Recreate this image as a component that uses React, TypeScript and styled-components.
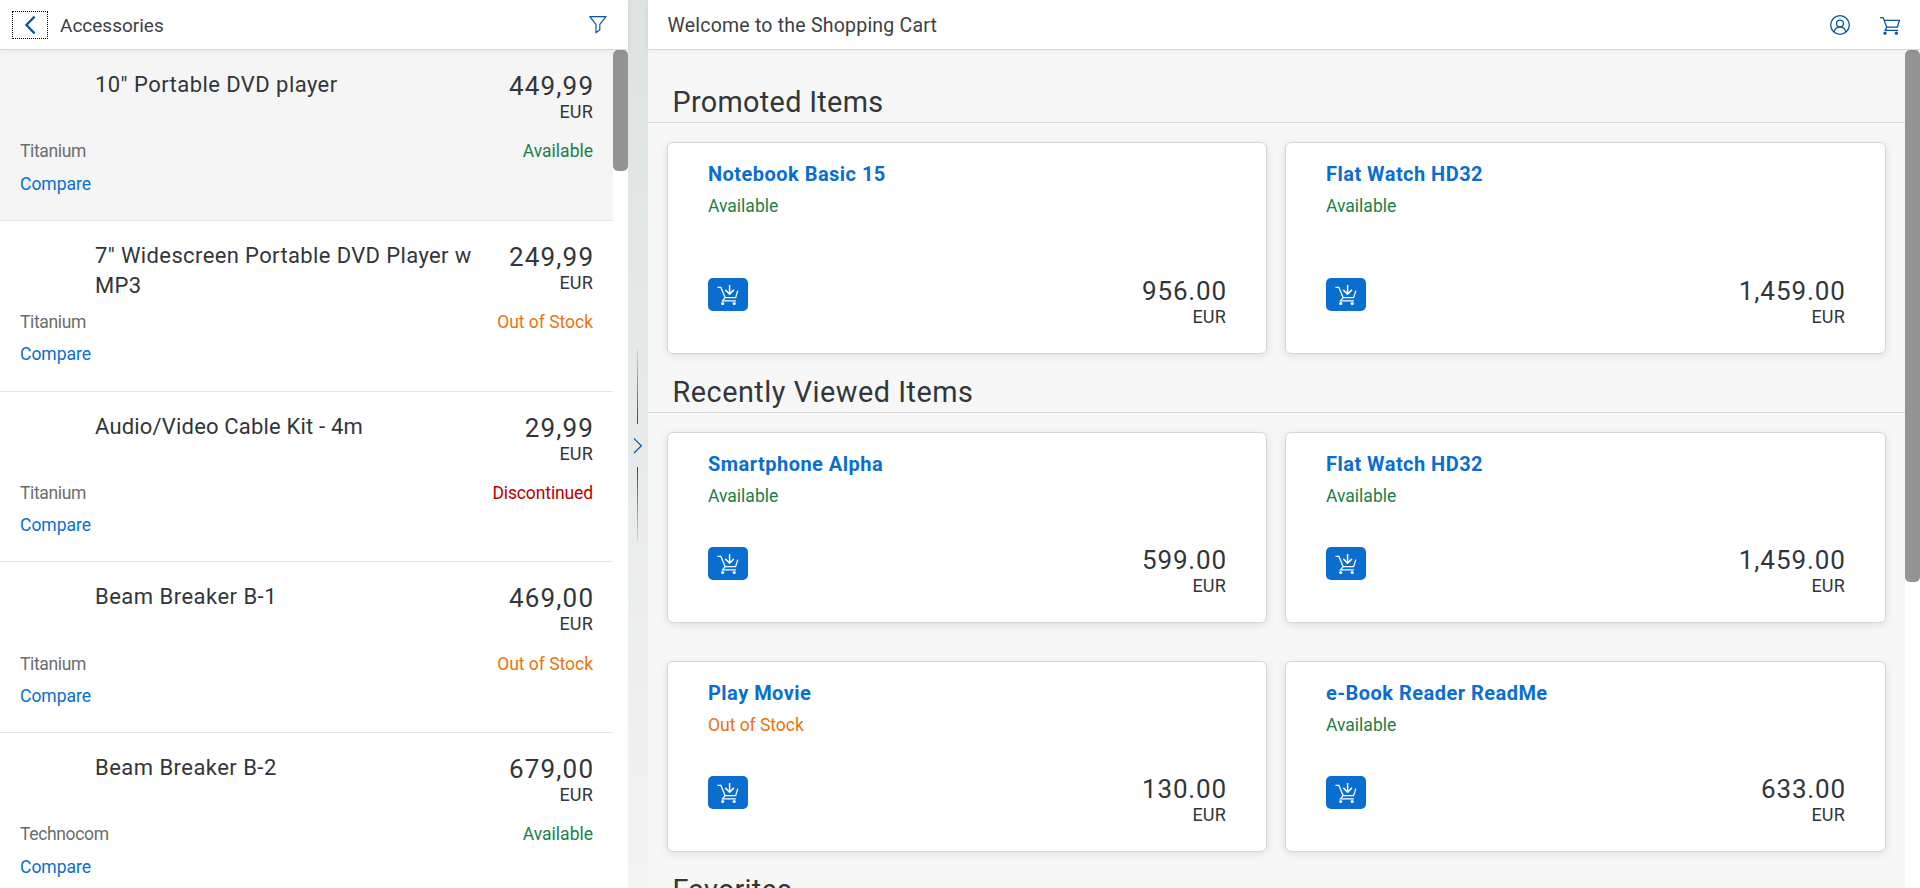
import React from "react";
import styled, { createGlobalStyle } from "styled-components";

const GlobalStyle = createGlobalStyle`
  * { box-sizing: border-box; }
  html, body { margin: 0; padding: 0; }
  body {
    font-family: Roboto, "Liberation Sans", sans-serif;
    font-size: 17.5px;
    color: #32363a;
    overflow: hidden;
  }
  svg { display: block; }
`;

type State = "Available" | "Out of Stock" | "Discontinued";

const stateStyle: Record<State, { color: string; tracking: number }> = {
  Available: { color: "#1a7e46", tracking: 0 },
  "Out of Stock": { color: "#e9730c", tracking: -0.03 },
  Discontinued: { color: "#bb0000", tracking: -0.12 },
};

const Shell = styled.div`
  display: flex;
  width: 100%;
  height: 100vh;
  min-height: 888px;
  max-height: 888px;
  overflow: hidden;
  background: #fff;
`;

const Master = styled.aside`
  display: flex;
  flex-direction: column;
  width: 628px;
  flex: none;
  background: #fff;
`;

const Detail = styled.main`
  display: flex;
  flex-direction: column;
  flex: 1;
  min-width: 0;
`;

const Bar = styled.header<{ $left: number; $right: number }>`
  display: flex;
  align-items: center;
  flex: none;
  height: 50px;
  padding: 0 ${(p) => p.$right}px 0 ${(p) => p.$left}px;
  background: #fff;
  border-bottom: 1px solid #d9d9d9;
  box-shadow: 0 1px 5px rgba(0, 0, 0, 0.07);
  z-index: 1;
`;

const BarTitle = styled.h1<{ $size: number; $tracking: number }>`
  flex: 1;
  margin: 0;
  padding-top: 2px;
  color: #3c4044;
  font-size: ${(p) => p.$size}px;
  line-height: 23px;
  font-weight: 400;
  letter-spacing: ${(p) => p.$tracking}px;
`;

const BackButton = styled.button`
  display: flex;
  align-items: center;
  justify-content: center;
  width: 36px;
  height: 28px;
  margin: 1px 12px 0 0;
  padding: 0;
  border: 1px dotted #000;
  background: none;
`;

const IconButton = styled.button`
  display: flex;
  padding: 0;
  border: 0;
  background: none;
`;

const BarActions = styled.div`
  display: flex;
  align-items: center;
  gap: 30px;
  padding-top: 1px;
`;

const Scroller = styled.div`
  display: flex;
  flex: 1;
  min-height: 0;
`;

const Track = styled.div`
  width: 15px;
  flex: none;
  background: #fff;
`;

const Thumb = styled.div<{ $length: number }>`
  height: ${(p) => p.$length}px;
  border-radius: 5px;
  background: #949494;
`;

const ProductList = styled.ul`
  flex: 1;
  margin: 0;
  padding: 0;
  list-style: none;
  overflow: hidden;
`;

const ProductRow = styled.li<{ $active?: boolean }>`
  height: 170.8px;
  padding: 20px 20px 0;
  background: ${(p) => (p.$active ? "#f5f5f5" : "#fff")};
  border-bottom: 1px solid #e5e5e5;
`;

const RowTop = styled.div`
  display: flex;
  justify-content: space-between;
  height: 70.15px;
  padding-left: 75px;
`;

const RowTitle = styled.span<{ $tracking: number }>`
  width: 394px;
  font-size: 22px;
  line-height: 30px;
  letter-spacing: ${(p) => p.$tracking}px;
`;

const RowLine = styled.div`
  display: flex;
  justify-content: space-between;
  height: 32.5px;
  line-height: 22px;
`;

const Brand = styled.span`
  color: #6a6d70;
  letter-spacing: -0.35px;
`;

const CompareLink = styled.a`
  color: #0a6ed1;
`;

const Status = styled.span<{ $state: State }>`
  color: ${(p) => stateStyle[p.$state].color};
  line-height: 22px;
  letter-spacing: ${(p) => stateStyle[p.$state].tracking}px;
`;

const Price = styled.div`
  display: flex;
  flex-direction: column;
  align-items: flex-end;
`;

const Amount = styled.span<{ $tracking: number }>`
  margin: 1px -${(p) => p.$tracking}px 0 0;
  font-size: 26px;
  line-height: 30px;
  letter-spacing: ${(p) => p.$tracking}px;
`;

const Currency = styled.span`
  font-size: 18px;
  line-height: 22px;
  letter-spacing: 0.2px;
`;

const Splitter = styled.div`
  display: flex;
  flex-direction: column;
  align-items: center;
  width: 20px;
  flex: none;
  padding-top: 350px;
  background: linear-gradient(to bottom, #dde2e3 0%, #e8ebec 55%, #f2f3f5 100%);
`;

const SplitterLine = styled.div<{ $to: "top" | "bottom" }>`
  width: 1px;
  height: 74px;
  margin-right: 1px;
  background: linear-gradient(to ${(p) => p.$to}, #0854a0, rgba(8, 84, 160, 0.12));
`;

const Grip = styled.div`
  height: 43px;
  padding: 14px 1px 0 0;
`;

const Content = styled.div`
  flex: 1;
  min-width: 0;
  padding-top: 14px;
  background: #f7f7f7;
  overflow: hidden;
`;

const SectionTitle = styled.h2<{ $tracking: number }>`
  display: flex;
  align-items: flex-end;
  height: 59px;
  margin: 0;
  padding: 0 24px 3px 24.5px;
  border-bottom: 1px solid #d9d9d9;
  font-size: 28.8px;
  line-height: 33px;
  font-weight: 400;
  letter-spacing: ${(p) => p.$tracking}px;
`;

const CardGrid = styled.div`
  display: grid;
  grid-template-columns: 600fr 601fr;
  gap: 38px 18px;
  padding: 19px 19px 0;
`;

const Card = styled.article<{ $height: number }>`
  display: flex;
  flex-direction: column;
  height: ${(p) => p.$height}px;
  padding: 19px 40px 25px;
  border: 1px solid #d5d5d5;
  border-radius: 6px;
  background: #fff;
  box-shadow: 0 2px 8px rgba(0, 0, 0, 0.1);
`;

const CardTitle = styled.a`
  margin-bottom: 9px;
  color: #0a6ed1;
  font-size: 20px;
  line-height: 24px;
  font-weight: 700;
  letter-spacing: 0.47px;
`;

const CardFooter = styled.div`
  display: flex;
  align-items: flex-start;
  justify-content: space-between;
  margin-top: auto;
`;

const CardPrice = styled(Price)`
  margin-top: -1px;
`;

const AddButton = styled.button`
  width: 40px;
  height: 33px;
  margin-top: 2px;
  padding: 0;
  border: 0;
  border-radius: 5px;
  background: #0a6ed1;
`;

const BackIcon = () => (
  <svg width="12" height="20" viewBox="0 0 12 20" fill="none" stroke="#0854a0" strokeWidth="2.3">
    <path d="M10.6 1.6 2.4 10l8.2 8.4" />
  </svg>
);

const FilterIcon = () => (
  <svg width="18" height="18" viewBox="0 0 18 18" fill="none" stroke="#0854a0" strokeWidth="1.2" strokeLinejoin="round">
    <path d="M.8.7h16.3l-6.3 7.6v5.5L7 16.7V8.3z" />
  </svg>
);

const UserIcon = () => (
  <svg width="20" height="20" viewBox="0 0 20 20" fill="none" stroke="#0854a0" strokeWidth="1.3">
    <circle cx="10" cy="10" r="9.3" />
    <circle cx="10" cy="8.5" r="3.4" />
    <path d="M4.2 17.2c.3-3.1 2.3-5.1 5.8-5.1s5.5 2 5.8 5.1" />
  </svg>
);

const CartIcon = () => (
  <svg width="20" height="20" viewBox="0 0 20 20" fill="none" stroke="#0854a0" strokeWidth="1.3" strokeLinejoin="round">
    <path d="M0 2.6h3.2L6.7 12.2h10.6L19.4 5.4H4.3M6.7 12.2l-1.6 3.2h13" />
    <circle cx="5" cy="18.2" r="1.6" fill="#0854a0" stroke="none" />
    <circle cx="16.4" cy="18.2" r="1.6" fill="#0854a0" stroke="none" />
  </svg>
);

const GripIcon = () => (
  <svg width="10" height="16" viewBox="0 0 10 16" fill="none" stroke="#0854a0" strokeWidth="1.2">
    <path d="M1 .6 8.4 7.8 1 15" />
  </svg>
);

const AddToCartIcon = () => (
  <svg width="40" height="33" viewBox="0 0 40 33" fill="none" stroke="#fff" strokeWidth="1.25">
    <path d="M9.5 9.4h3.4l4.2 10.2h10.5l2.2-7M17.1 19.6l-2.6 3.3h13.4" />
    <path d="M21.6 7v9.2M17.3 11.9l4.3 4.3 4.3-4.3" strokeWidth="1.5" />
    <circle cx="14.7" cy="25.5" r="1.6" fill="#fff" stroke="none" />
    <circle cx="26.2" cy="25.5" r="1.6" fill="#fff" stroke="none" />
  </svg>
);

interface Product {
  name: string;
  price: string;
  brand: string;
  state: State;
  tracking: number;
}

const products: Product[] = [
  { name: '10" Portable DVD player', price: "449,99", brand: "Titanium", state: "Available", tracking: 0.44 },
  { name: '7" Widescreen Portable DVD Player w MP3', price: "249,99", brand: "Titanium", state: "Out of Stock", tracking: 0.37 },
  { name: "Audio/Video Cable Kit - 4m", price: "29,99", brand: "Titanium", state: "Discontinued", tracking: 0.18 },
  { name: "Beam Breaker B-1", price: "469,00", brand: "Titanium", state: "Out of Stock", tracking: 0.48 },
  { name: "Beam Breaker B-2", price: "679,00", brand: "Technocom", state: "Available", tracking: 0.46 },
];

interface CardData {
  name: string;
  state: State;
  price: string;
}

const promoted: CardData[] = [
  { name: "Notebook Basic 15", state: "Available", price: "956.00" },
  { name: "Flat Watch HD32", state: "Available", price: "1,459.00" },
];

const viewed: CardData[] = [
  { name: "Smartphone Alpha", state: "Available", price: "599.00" },
  { name: "Flat Watch HD32", state: "Available", price: "1,459.00" },
  { name: "Play Movie", state: "Out of Stock", price: "130.00" },
  { name: "e-Book Reader ReadMe", state: "Available", price: "633.00" },
];

const ProductCards = ({ items, height }: { items: CardData[]; height: number }) => (
  <CardGrid>
    {items.map((item) => (
      <Card key={item.name} $height={height}>
        <CardTitle>{item.name}</CardTitle>
        <Status $state={item.state}>{item.state}</Status>
        <CardFooter>
          <AddButton aria-label="Add to cart">
            <AddToCartIcon />
          </AddButton>
          <CardPrice>
            <Amount $tracking={item.price.length > 6 ? 0.95 : 0.8}>{item.price}</Amount>
            <Currency>EUR</Currency>
          </CardPrice>
        </CardFooter>
      </Card>
    ))}
  </CardGrid>
);

export default function App() {
  return (
    <>
      <GlobalStyle />
      <Shell>
        <Master>
          <Bar $left={12} $right={21}>
            <BackButton aria-label="Back">
              <BackIcon />
            </BackButton>
            <BarTitle $size={19} $tracking={0}>Accessories</BarTitle>
            <BarActions>
              <IconButton aria-label="Filter">
                <FilterIcon />
              </IconButton>
            </BarActions>
          </Bar>
          <Scroller>
            <ProductList>
              {products.map((p, i) => (
                <ProductRow key={p.name} $active={i === 0}>
                  <RowTop>
                    <RowTitle $tracking={p.tracking}>{p.name}</RowTitle>
                    <Price>
                      <Amount $tracking={1.15}>{p.price}</Amount>
                      <Currency>EUR</Currency>
                    </Price>
                  </RowTop>
                  <RowLine>
                    <Brand>{p.brand}</Brand>
                    <Status $state={p.state}>{p.state}</Status>
                  </RowLine>
                  <RowLine>
                    <CompareLink>Compare</CompareLink>
                  </RowLine>
                </ProductRow>
              ))}
            </ProductList>
            <Track>
              <Thumb $length={121} />
            </Track>
          </Scroller>
        </Master>
        <Splitter>
          <SplitterLine $to="top" />
          <Grip>
            <GripIcon />
          </Grip>
          <SplitterLine $to="bottom" />
        </Splitter>
        <Detail>
          <Bar $left={19.5} $right={20}>
            <BarTitle $size={19.5} $tracking={0.22}>Welcome to the Shopping Cart</BarTitle>
            <BarActions>
              <IconButton aria-label="Account">
                <UserIcon />
              </IconButton>
              <IconButton aria-label="Cart">
                <CartIcon />
              </IconButton>
            </BarActions>
          </Bar>
          <Scroller>
            <Content>
              <SectionTitle $tracking={0.32}>Promoted Items</SectionTitle>
              <ProductCards items={promoted} height={212} />
              <SectionTitle $tracking={0.52}>Recently Viewed Items</SectionTitle>
              <ProductCards items={viewed} height={191} />
              <SectionTitle $tracking={0.25}>Favorites</SectionTitle>
            </Content>
            <Track>
              <Thumb $length={532} />
            </Track>
          </Scroller>
        </Detail>
      </Shell>
    </>
  );
}
